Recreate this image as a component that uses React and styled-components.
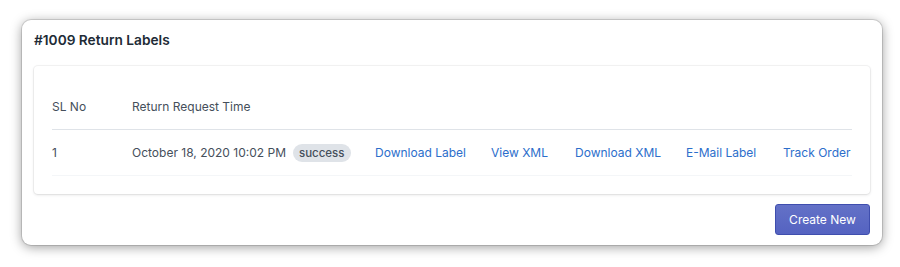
import React from 'react'
import styled, { createGlobalStyle } from 'styled-components'

const GlobalStyle = createGlobalStyle`
  body {
    margin: 0;
    background: #ffffff;
    font-family: Inter, "Noto Sans", sans-serif;
    color: #212b36;
  }
`

const Page = styled.div`
  padding: 20px 18px 22px 22px;
`

const Card = styled.div`
  width: 860px;
  height: 225px;
  box-sizing: border-box;
  background: #fff;
  border-radius: 9px;
  box-shadow: 0 0 0 1px rgba(0, 0, 0, 0.12), 0 2px 12px rgba(0, 0, 0, 0.4);
  display: flex;
  flex-direction: column;
  padding: 10px 12px;
`

const Title = styled.h2`
  margin: 0;
  font-size: 13.7px;
  line-height: 20px;
  font-weight: 600;
  color: #212b36;
`

const Panel = styled.div`
  margin-top: 16px;
  border-radius: 4px;
  background: #fff;
  box-shadow: 0 0 0 1px rgba(63, 63, 68, 0.05), 0 1px 3px rgba(63, 63, 68, 0.15);
  padding: 18px;
`

const Row = styled.div`
  display: grid;
  grid-template-columns: 80px 243px 116px 84px 111px 97px 1fr;
  align-items: center;
  height: 45px;
  border-bottom: 1px solid ${p => (p.$head ? '#dfe3e8' : '#f4f6f8')};
  font-size: 12px;
  color: #454f5b;
`

const Cell = styled.div`
  display: flex;
  align-items: center;
  gap: 7px;
  white-space: nowrap;
`

const Badge = styled.span`
  display: inline-block;
  background: #dfe3e8;
  color: #454f5b;
  border-radius: 10px;
  padding: 0 6px;
  font-size: 11.5px;
  line-height: 18px;
  font-weight: 500;
`

const Link = styled.a`
  color: #2c6ecb;
  text-decoration: none;
  cursor: pointer;
  &:hover {
    text-decoration: underline;
  }
`

const Footer = styled.div`
  display: flex;
  justify-content: flex-end;
  margin-top: 10px;
`

const Button = styled.button`
  width: 95px;
  height: 31px;
  border-radius: 3px;
  border: 1px solid #3f4eae;
  background: linear-gradient(180deg, #6371c7, #5563c1);
  color: #fff;
  font-family: inherit;
  font-size: 12px;
  cursor: pointer;
`

const links = ['Download Label', 'View XML', 'Download XML', 'E-Mail Label', 'Track Order']

export default function App() {
  return (
    <>
      <GlobalStyle />
      <Page>
        <Card>
          <Title>#1009 Return Labels</Title>
          <Panel>
            <Row $head>
              <Cell>SL No</Cell>
              <Cell>Return Request Time</Cell>
            </Row>
            <Row>
              <Cell>1</Cell>
              <Cell>
                October 18, 2020 10:02 PM <Badge>success</Badge>
              </Cell>
              {links.map(l => (
                <Cell key={l}>
                  <Link>{l}</Link>
                </Cell>
              ))}
            </Row>
          </Panel>
          <Footer>
            <Button>Create New</Button>
          </Footer>
        </Card>
      </Page>
    </>
  )
}
